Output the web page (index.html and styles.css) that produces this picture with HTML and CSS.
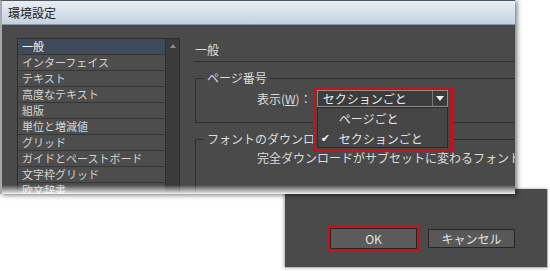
FILE: index.html
```html
<!DOCTYPE html>
<html lang="ja">
<head>
    <meta charset="UTF-8">
    <title>環境設定</title>
    <link rel="stylesheet" href="styles.css">
</head>
<body>
    <div class="win prefs">
        <div class="titlebar">環境設定</div>
        <div class="content">
            <div class="cats">
                <ul class="cat-list">
                    <li class="selected">一般</li>
                    <li>インターフェイス</li>
                    <li>テキスト</li>
                    <li>高度なテキスト</li>
                    <li>組版</li>
                    <li>単位と増減値</li>
                    <li>グリッド</li>
                    <li>ガイドとペーストボード</li>
                    <li>文字枠グリッド</li>
                    <li>欧文辞書</li>
                </ul>
                <div class="scrollbar"><span class="arrow-up"></span></div>
            </div>

            <div class="panel">
                <div class="panel-head">一般</div>

                <fieldset class="group">
                    <legend>ページ番号</legend>
                    <div class="field-row">
                        <span class="label">表示(<u>W</u>)：</span>
                        <div class="select-wrap">
                            <div class="highlight"></div>
                            <div class="select">
                                <span class="select-value">セクションごと</span>
                                <span class="select-btn">
                                    <svg width="8" height="5" viewBox="0 0 8 5"><path d="M0 0H8L4 5Z" fill="#eee"/></svg>
                                </span>
                            </div>
                            <ul class="menu">
                                <li>ページごと</li>
                                <li class="checked">セクションごと</li>
                            </ul>
                        </div>
                    </div>
                </fieldset>

                <fieldset class="group group-fonts">
                    <legend>フォントのダウンロード</legend>
                    <p class="note">完全ダウンロードがサブセットに変わるフォント</p>
                </fieldset>
            </div>
        </div>
    </div>

    <div class="win dialog-foot">
        <div class="buttons">
            <div class="focus-frame"><button class="btn">OK</button></div>
            <button class="btn btn-cancel">キャンセル</button>
        </div>
    </div>
</body>
</html>
```

FILE: styles.css
```css
body {
    margin: 0;
    width: 550px;
    height: 271px;
    overflow: hidden;
    background: #fff;
    font-family: "Noto Sans CJK JP", "Noto Sans", sans-serif;
    font-size: 12px;
    color: #dcdcdc;
    position: relative;
}
ul {
    list-style: none;
    margin: 0;
    padding: 0;
}

/* windows */
.win {
    position: absolute;
    background: #4a4a4a;
    box-sizing: border-box;
}
.prefs {
    left: 0;
    top: 0;
    width: 515px;
    height: 194px;
    z-index: 2;
    border-top: 1px solid #555;
    border-left: 2px solid #a9a9a9;
    box-shadow: 2px 1px 5px rgba(0,0,0,0.55);
    overflow: hidden;
}
.prefs::after {
    content: "";
    position: absolute;
    left: 0;
    right: 0;
    bottom: 0;
    height: 9px;
    background: linear-gradient(rgba(255,255,255,0), rgba(255,255,255,0.92));
}
.titlebar {
    height: 24px;
    line-height: 24px;
    padding-left: 6px;
    font-size: 12px;
    color: #222;
    background: linear-gradient(#e7edf4, #c4d1e1);
    border-bottom: 1px solid #8a96a4;
    box-sizing: border-box;
}
.content {
    display: flex;
    gap: 14px;
    padding: 13px 0 0 15px;
}

/* category list */
.cats {
    display: flex;
    width: 161px;
    height: 170px;
    border: 1px solid #2c2c2c;
    flex-shrink: 0;
}
.cat-list {
    flex: 1;
    background: #4d4d4d;
}
.cat-list li {
    height: 16px;
    line-height: 15px;
    padding-left: 4px;
    font-size: 11px;
    color: #d4d4d4;
    border-bottom: 1px solid #363636;
    box-sizing: border-box;
}
.cat-list li.selected {
    background: #3f4a5b;
    color: #f2f2f2;
}
.scrollbar {
    width: 14px;
    background: #3b3b3b;
    border-left: 1px solid #303030;
    display: flex;
    justify-content: center;
    padding-top: 5px;
    box-sizing: border-box;
}
.arrow-up {
    width: 0;
    height: 0;
    border-left: 3px solid transparent;
    border-right: 3px solid transparent;
    border-bottom: 4px solid #8c8c8c;
}

/* right panel */
.panel {
    flex: 1;
    overflow: hidden;
}
.panel-head {
    height: 24px;
    line-height: 23px;
    padding-left: 1px;
    border-bottom: 1px solid #2f2f2f;
    box-sizing: border-box;
}
.group {
    margin: 8px -30px 0 1px;
    padding: 0 0 0 8px;
    border: 1px solid #2e2e2e;
}
.group legend {
    padding: 0 3px;
    line-height: 16px;
    color: #dcdcdc;
}
.field-row {
    display: flex;
    align-items: center;
    gap: 5px;
    margin: 4px 0 15px 53px;
}
.label u {
    text-decoration: underline;
}
.select-wrap {
    position: relative;
}
.select {
    position: relative;
    z-index: 2;
    display: flex;
    width: 131px;
    height: 17px;
    border: 1px solid #8e8e8e;
    background: #3c3c3c;
    box-sizing: border-box;
}
.select-value {
    flex: 1;
    padding-left: 5px;
    line-height: 15px;
    color: #ececec;
}
.select-btn {
    width: 14px;
    border-left: 1px solid #777;
    display: flex;
    align-items: center;
    justify-content: center;
}
.highlight {
    position: absolute;
    z-index: 1;
    left: -4px;
    top: -3px;
    width: 140px;
    height: 65px;
    border: 3px solid #c8121a;
    background: #474747;
    box-sizing: border-box;
}
.menu {
    position: absolute;
    z-index: 2;
    left: 0;
    top: 17px;
    width: 131px;
    height: 41px;
    background: #464646;
    border: 1px solid #2b2b2b;
    box-sizing: border-box;
    padding-top: 1px;
}
.menu li {
    height: 20px;
    line-height: 19px;
    padding-left: 21px;
    color: #e4e4e4;
    position: relative;
}
.menu li.checked::before {
    content: "\2714";
    position: absolute;
    left: 3px;
    font-family: "DejaVu Sans", sans-serif;
    font-size: 11px;
    color: #f0f0f0;
}
.group-fonts {
    margin-top: 8px;
    height: 70px;
}
.note {
    margin: 3px 0 0 53px;
    line-height: 16px;
    white-space: nowrap;
}

/* bottom dialog part */
.dialog-foot {
    left: 285px;
    top: 189px;
    width: 263px;
    height: 79px;
    z-index: 1;
    border-right: 1px solid #bdbdbd;
    border-bottom: 1px solid #bdbdbd;
    box-shadow: -1px 0 3px rgba(0,0,0,0.35);
}
.buttons {
    display: flex;
    justify-content: flex-end;
    align-items: center;
    gap: 8px;
    padding: 36px 32px 0 0;
}
.focus-frame {
    border: 3px solid #c8121a;
    display: flex;
}
.btn {
    font-family: "Noto Sans CJK JP", "Noto Sans", sans-serif;
    font-size: 12px;
    color: #e2e2e2;
    background: #5b5b5b;
    border: 1px solid #262626;
    width: 87px;
    height: 21px;
    padding: 0;
    line-height: 18px;
}
.btn-cancel {
    height: 19px;
    line-height: 16px;
    background: #585858;
}
```
